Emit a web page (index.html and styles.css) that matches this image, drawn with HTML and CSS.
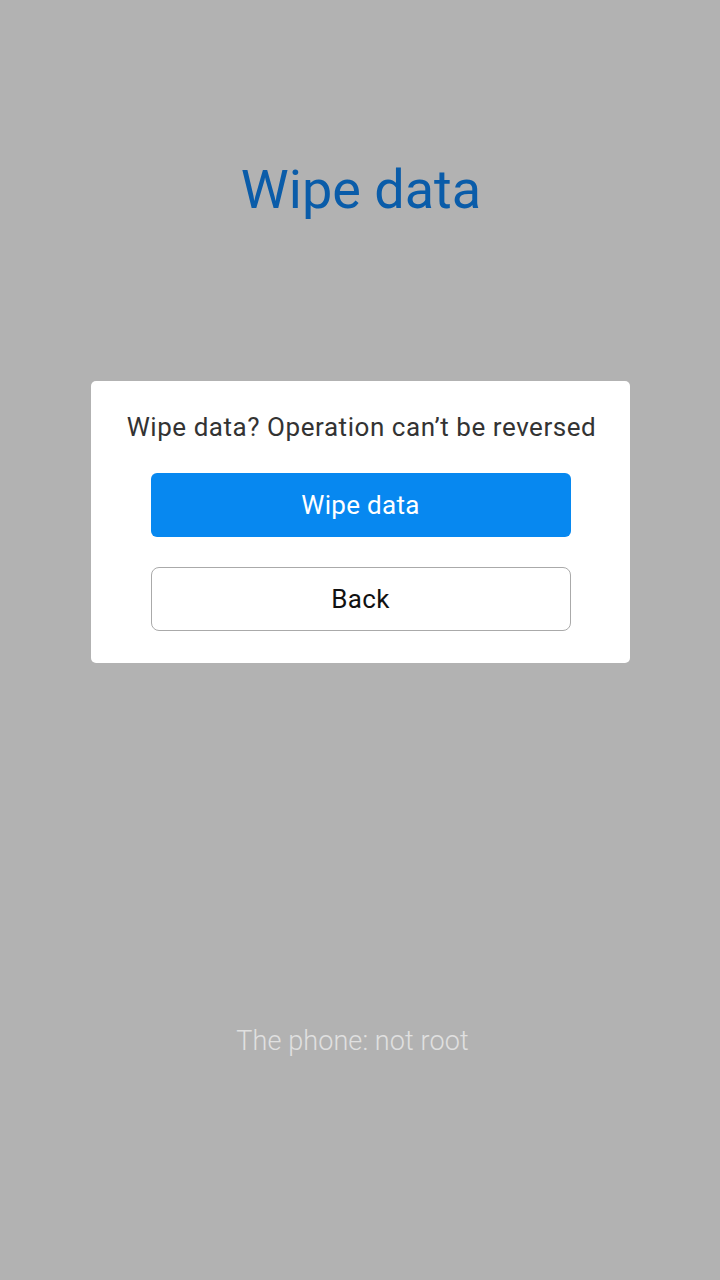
FILE: index.html
```html
<!DOCTYPE html>
<html lang="en">
<head>
	<meta charset="UTF-8">
	<meta name="viewport" content="width=device-width,initial-scale=1.0">
	<title>Wipe data</title>
	<link rel="stylesheet" href="styles.css">
</head>
<body>
	<div class="screen">
		<!-- 标题 -->
		<h1 class="title">Wipe data</h1>
		<!-- 确认弹窗 -->
		<div class="dialog">
			<p class="dialogText">Wipe data? Operation can’t be reversed</p>
			<a href="##" class="btn btnPrimary">Wipe data</a>
			<a href="##" class="btn btnPlain">Back</a>
		</div>
		<!-- 底部状态 -->
		<p class="status">The phone: not root</p>
	</div>
</body>
</html>
```

FILE: styles.css
```css
*{
	margin: 0;
	padding: 0;
	box-sizing: border-box;
}
body{
	font-family: Roboto, "Liberation Sans", sans-serif;
	background: #b2b2b2;
}
a{
	text-decoration: none;
}
.screen{
	width: 720px;
	height: 1280px;
	display: flex;
	flex-direction: column;
	align-items: center;
}
/*标题*/
.title{
	margin-top: 155px;
	font-size: 54px;
	font-weight: normal;
	line-height: 70px;
	color: #0a5ca9;
	margin-left: 2px;
}
/*弹窗*/
.dialog{
	margin-top: 156px;
	width: 539px;
	height: 282px;
	margin-left: 1px;
	background: #fff;
	border-radius: 5px;
	display: flex;
	flex-direction: column;
	align-items: center;
	padding-top: 28px;
}
.dialogText{
	font-size: 26px;
	line-height: 36px;
	color: #333;
	letter-spacing: 0.55px;
	margin-left: 2px;
}
.btn{
	display: flex;
	align-items: center;
	justify-content: center;
	width: 420px;
	height: 64px;
	font-size: 26px;
	letter-spacing: 0.3px;
	border-radius: 6px;
}
.btnPrimary{
	margin-top: 28px;
	background: #0788f0;
	color: #fff;
}
.btnPlain{
	margin-top: 30px;
	border: 1px solid #aaa;
	border-radius: 8px;
	color: #111;
}
/*底部文字*/
.status{
	margin-top: 360px;
	margin-right: 15px;
	font-size: 27px;
	font-weight: 300;
	line-height: 36px;
	color: #e0e0e0;
	letter-spacing: 0.1px;
}
```
